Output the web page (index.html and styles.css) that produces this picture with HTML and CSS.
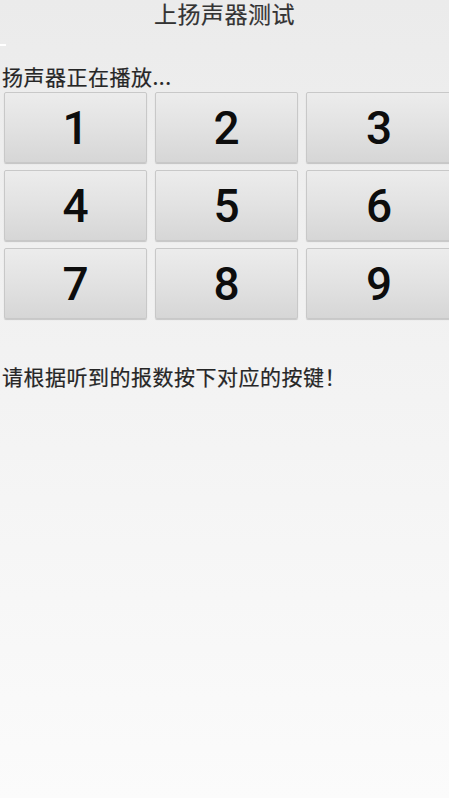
FILE: index.html
```html
<!DOCTYPE html>
<html lang="zh-CN">
<head>
<meta charset="utf-8">
<title>上扬声器测试</title>
<link rel="stylesheet" href="styles.css">
</head>
<body>
<div class="page">
  <div class="title">上扬声器测试</div>
  <div class="divider"></div>
  <div class="status">扬声器正在播放...</div>
  <div class="keypad">
    <div class="key">1</div>
    <div class="key">2</div>
    <div class="key">3</div>
    <div class="key">4</div>
    <div class="key">5</div>
    <div class="key">6</div>
    <div class="key">7</div>
    <div class="key">8</div>
    <div class="key">9</div>
  </div>
  <div class="hint">请根据听到的报数按下对应的按键！</div>
</div>
</body>
</html>
```
FILE: styles.css
```css
html, body {
  margin: 0;
  padding: 0;
  height: 100%;
  overflow: hidden;
}
body {
  background: linear-gradient(to bottom, #ebebeb 0%, #f3f3f3 50%, #fbfbfb 100%);
  font-family: "Noto Sans CJK SC", "Noto Sans", sans-serif;
  color: #333;
}
.page {
  display: flex;
  flex-direction: column;
  height: 100%;
}
.title {
  height: 26px;
  line-height: 26px;
  font-size: 23px;
  letter-spacing: 0.5px;
  text-align: center;
  color: #333;
  -webkit-text-stroke: 0.2px #333;
}
.divider {
  margin-top: 18px;
  width: 6px;
  height: 2px;
  background: #ffffff;
}
.status {
  margin-top: 18px;
  padding-left: 2px;
  height: 24px;
  line-height: 24px;
  font-size: 21px;
  letter-spacing: 0.5px;
  color: #262626;
  -webkit-text-stroke: 0.2px #262626;
}
.keypad {
  margin-top: 4px;
  padding-left: 4px;
  display: grid;
  grid-template-columns: 143px 143px 146px;
  grid-auto-rows: 71px;
  column-gap: 8px;
  row-gap: 7px;
}
.key {
  box-sizing: border-box;
  display: flex;
  align-items: center;
  justify-content: center;
  border: 1px solid #c8c8c8;
  border-radius: 2px;
  background: linear-gradient(to bottom, #ececec 0%, #e2e2e2 50%, #d6d6d6 100%);
  box-shadow: 0 1px 1px rgba(0, 0, 0, 0.18);
  font-family: Roboto, "Noto Sans", sans-serif;
  font-weight: 500;
  font-size: 46px;
  color: #0d0d0d;
  line-height: 1;
}
.hint {
  margin-top: 45px;
  padding-left: 2px;
  height: 24px;
  line-height: 24px;
  font-size: 21px;
  letter-spacing: 0.5px;
  color: #262626;
  -webkit-text-stroke: 0.2px #262626;
}
```
